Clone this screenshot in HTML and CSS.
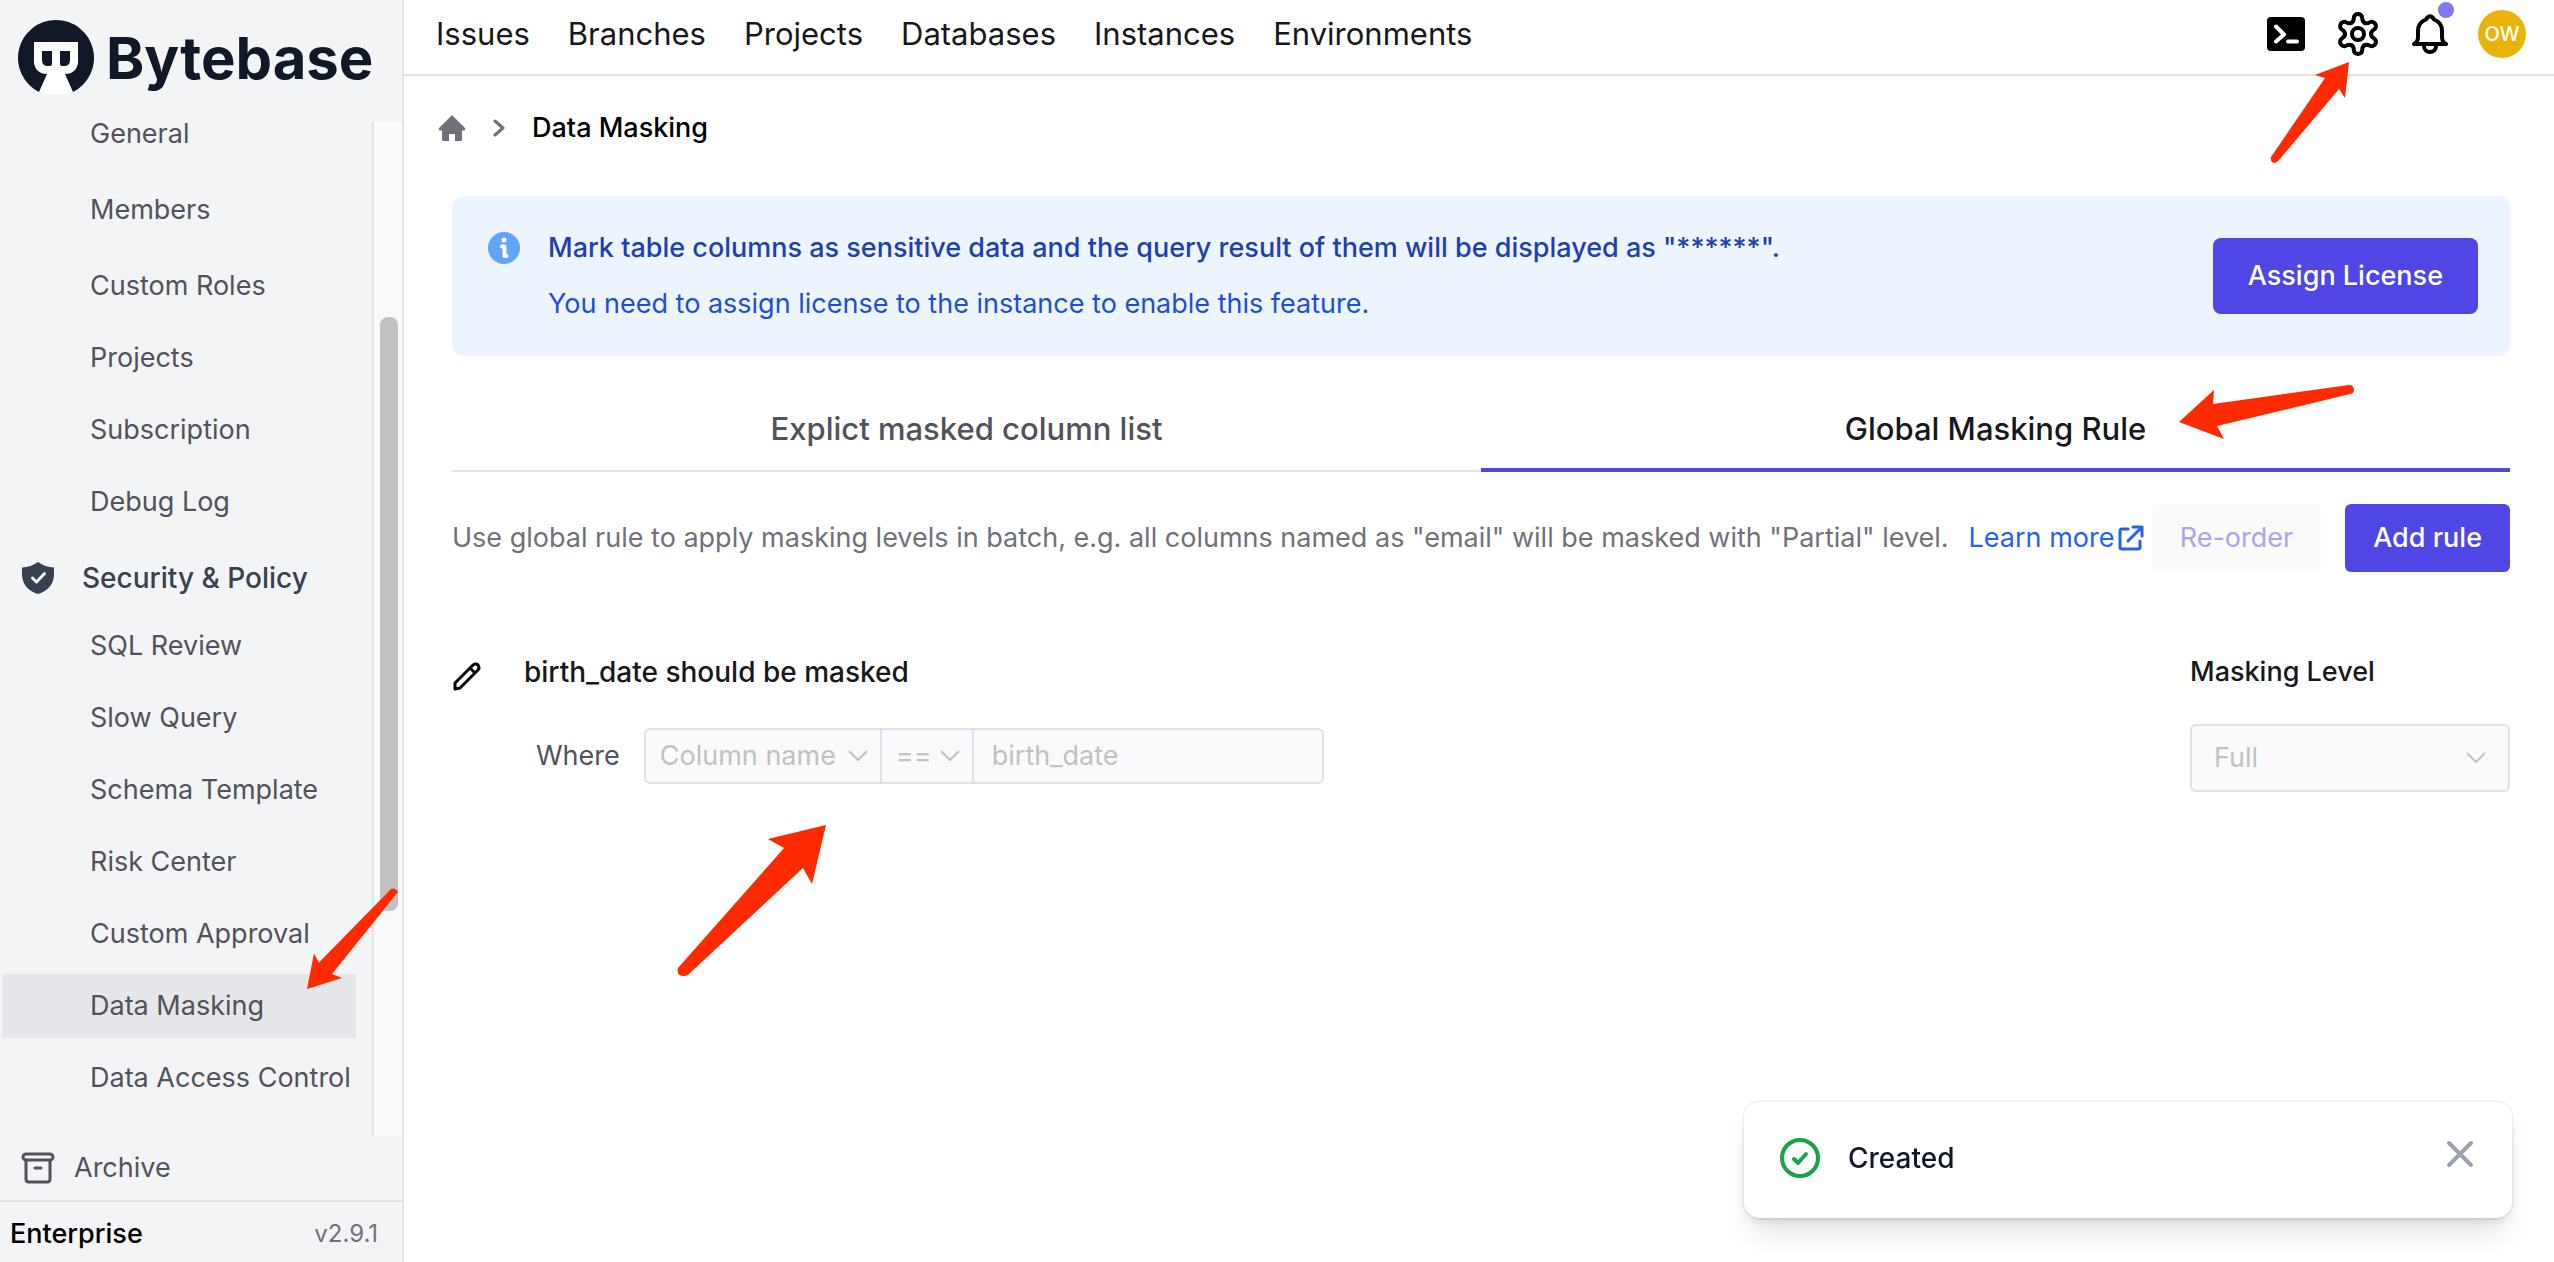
FILE: index.html
```html
<!DOCTYPE html>
<html lang="en">
<head>
    <meta charset="UTF-8">
    <meta name="viewport" content="width=device-width, initial-scale=1.0">
    <title>Data Masking - Bytebase</title>
    <link rel="stylesheet" href="styles.css">
</head>
<body>
    <div class="app">
        <aside class="sidebar">
            <a class="logo" href="#">
                <svg width="76" height="76" viewBox="0 0 76 76" aria-hidden="true">
                    <path fill="#fff" d="M28 50h20l7 22q-17 5-34 0z"/>
                    <path fill="#111827" d="M38 0A38 38 0 0 1 55 72L47 54Q60 52 60 40V22H16v18Q16 52 29 54L21 72A38 38 0 0 1 38 0z"/>
                    <path fill="#fff" d="M16 22h44v18q0 14-14 14H30q-14 0-14-14z"/>
                    <path fill="#111827" d="M24 31h10v13q0 2-2 2h-2q-6 0-6-6zM42 31h10v9q0 6-6 6h-2q-2 0-2-2z"/>
                </svg>
                <span>Bytebase</span>
            </a>
            <div class="scroll-area">
                <nav class="side-nav">
                    <a href="#">General</a>
                    <a href="#" class="tall">Members</a>
                    <a href="#">Custom Roles</a>
                    <a href="#">Projects</a>
                    <a href="#">Subscription</a>
                    <a href="#">Debug Log</a>
                    <div class="side-title">
                        <svg width="32" height="32" viewBox="0 0 32 32" aria-hidden="true">
                            <path fill="#374151" d="M16 0q7 5 16 5.500V12c0 10-6 17-16 20C6 29 0 22 0 12V5.500Q9 5 16 0z"/>
                            <path d="M10.500 16l4 4 8-8.500" fill="none" stroke="#f3f4f6" stroke-width="3" stroke-linecap="round" stroke-linejoin="round"/>
                        </svg>
                        <span>Security &amp; Policy</span>
                    </div>
                    <a href="#">SQL Review</a>
                    <a href="#">Slow Query</a>
                    <a href="#">Schema Template</a>
                    <a href="#">Risk Center</a>
                    <a href="#">Custom Approval</a>
                    <a href="#" class="active">Data Masking
                        <svg class="arrow arrow-menu" width="92" height="102" viewBox="0 0 92 102" aria-hidden="true">
                            <path d="M0 101 7 65.500l5 9L84 1q4-2 7 3l-66 82 10 4z"/>
                        </svg>
                    </a>
                    <a href="#">Data Access Control</a>
                </nav>
                <div class="track"><div class="thumb"></div></div>
            </div>
            <a class="archive" href="#">
                <svg width="34" height="32" viewBox="0 0 34 32" fill="none" stroke="#52525b" stroke-width="3" stroke-linecap="round" stroke-linejoin="round" aria-hidden="true">
                    <rect x="2" y="2" width="30" height="6" rx="3"/>
                    <path d="M5 8v19q0 3 3 3h18q3 0 3-3V8M14 16h6"/>
                </svg>
                <span>Archive</span>
            </a>
            <div class="plan">
                <span>Enterprise</span>
                <span class="version">v2.9.1</span>
            </div>
        </aside>

        <div class="content">
            <header class="topbar">
                <nav class="top-nav">
                    <a href="#">Issues</a>
                    <a href="#">Branches</a>
                    <a href="#">Projects</a>
                    <a href="#">Databases</a>
                    <a href="#">Instances</a>
                    <a href="#">Environments</a>
                </nav>
                <div class="top-actions">
                    <button class="icon-btn" aria-label="SQL Editor">
                        <svg width="40" height="34" viewBox="0 0 40 34" aria-hidden="true">
                            <rect x="1" width="38" height="34" rx="4"/>
                            <path d="M10 9.500l8 8-8 7M22 24.500h9" fill="none" stroke="#fff" stroke-width="4" stroke-linecap="round" stroke-linejoin="round"/>
                        </svg>
                    </button>
                    <button class="icon-btn" aria-label="Settings">
                        <svg width="48" height="48" viewBox="-24 -24 48 48" fill="none" stroke="#000" stroke-width="4" stroke-linecap="round" aria-hidden="true">
                            <circle r="6"/>
                            <path d="M-6.500-11.300C-4.500-12.400-4.200-14-4.200-16C-4.200-21.300 4.200-21.300 4.200-16C4.200-14 4.500-12.400 6.500-11.300"/>
                            <path transform="rotate(60)" d="M-6.500-11.300C-4.500-12.400-4.200-14-4.200-16C-4.200-21.300 4.200-21.300 4.200-16C4.200-14 4.500-12.400 6.500-11.300"/>
                            <path transform="rotate(120)" d="M-6.500-11.300C-4.500-12.400-4.200-14-4.200-16C-4.200-21.300 4.200-21.300 4.200-16C4.200-14 4.500-12.400 6.500-11.300"/>
                            <path transform="rotate(180)" d="M-6.500-11.300C-4.500-12.400-4.200-14-4.200-16C-4.200-21.300 4.200-21.300 4.200-16C4.200-14 4.500-12.400 6.500-11.300"/>
                            <path transform="rotate(240)" d="M-6.500-11.300C-4.500-12.400-4.200-14-4.200-16C-4.200-21.300 4.200-21.300 4.200-16C4.200-14 4.500-12.400 6.500-11.300"/>
                            <path transform="rotate(300)" d="M-6.500-11.300C-4.500-12.400-4.200-14-4.200-16C-4.200-21.300 4.200-21.300 4.200-16C4.200-14 4.500-12.400 6.500-11.300"/>
                        </svg>
                        <svg class="arrow arrow-gear" width="80" height="102" viewBox="0 0 80 102" aria-hidden="true">
                            <path d="M79 0 45 13l10 3L1 95q-1 5 3 6 3 0 5-3l60-71 6 9z"/>
                        </svg>
                    </button>
                    <button class="icon-btn" aria-label="Notifications">
                        <svg width="36" height="40" viewBox="0 0 36 40" fill="none" stroke="#000" stroke-width="4" stroke-linejoin="round" aria-hidden="true">
                            <path d="M2 30Q6 28 6 23V17C6 10 10 7 14 5.500Q18-1 22 5.500C26 7 30 10 30 17V23Q30 28 34 30z"/>
                            <path d="M12 31v1a6 6 0 0 0 12 0v-1"/>
                        </svg>
                        <span class="dot"></span>
                    </button>
                    <button class="avatar">OW</button>
                </div>
            </header>

            <main class="page">
                <nav class="breadcrumb">
                    <a href="#" aria-label="Home">
                        <svg width="28" height="28" viewBox="0 0 28 28" fill="#71717a" aria-hidden="true">
                            <path d="M14 1 27 14q1 2-1 2.500H24V26q0 1-1 1h-6v-7h-6v7H5q-1 0-1-1v-9.500H2Q0 16 1 14z"/>
                        </svg>
                    </a>
                    <svg width="12" height="18" viewBox="0 0 12 18" fill="none" stroke="#71717a" stroke-width="3" stroke-linecap="round" stroke-linejoin="round" aria-hidden="true">
                        <path d="M2 2l8 7-8 7"/>
                    </svg>
                    <span>Data Masking</span>
                </nav>

                <section class="banner">
                    <svg width="32" height="32" viewBox="0 0 32 32" aria-hidden="true">
                        <circle cx="16" cy="16" r="16" fill="#60a5fa"/>
                        <circle cx="16" cy="8" r="2.500" fill="#fff"/>
                        <path d="M14 14.500h2.500V24h2" fill="none" stroke="#fff" stroke-width="4" stroke-linecap="round" stroke-linejoin="round"/>
                    </svg>
                    <div class="banner-text">
                        <h3>Mark table columns as sensitive data and the query result of them will be displayed as "******".</h3>
                        <p>You need to assign license to the instance to enable this feature.</p>
                    </div>
                    <button class="btn-primary btn-license">Assign License</button>
                </section>

                <div class="tabs">
                    <button class="tab">Explict masked column list</button>
                    <button class="tab tab-active">
                        <span class="tab-label">Global Masking Rule
                            <svg class="arrow arrow-tab" width="176" height="56" viewBox="0 0 176 56" aria-hidden="true">
                                <path d="M0 38 35 6l-1 14L170 1q5 0 5 5 0 3-4 4L38 42l7 13z"/>
                            </svg>
                        </span>
                    </button>
                </div>

                <div class="toolbar">
                    <p>
                        <span>Use global rule to apply masking levels in batch, e.g. all columns named as "email" will be masked with "Partial" level.</span>
                        <a href="#">Learn more<svg width="26" height="26" viewBox="0 0 26 26" fill="none" stroke="#2563eb" stroke-width="3" stroke-linecap="round" stroke-linejoin="round" aria-hidden="true">
                            <path d="M10 4H4Q2 4 2 6v16q0 2 2 2h16q2 0 2-2v-6M15 2h9v9M23 3 10 16"/>
                        </svg></a>
                    </p>
                    <div class="toolbar-buttons">
                        <button class="btn-plain" disabled>Re-order</button>
                        <button class="btn-primary">Add rule</button>
                    </div>
                </div>

                <section class="rule">
                    <button class="edit-btn" aria-label="Edit rule">
                        <svg width="30" height="30" viewBox="0 0 30 30" fill="none" stroke="#000" stroke-width="3" stroke-linejoin="round" aria-hidden="true">
                            <path d="M3 28v-6L21 4q3-2 5 0 2 3 0 5L8 27zM18 7l5 5"/>
                        </svg>
                    </button>
                    <div class="rule-body">
                        <h3>birth_date should be masked</h3>
                        <div class="condition">
                            <span>Where</span>
                            <div class="condition-fields">
                                <div class="select-wrap field-column">
                                    <select disabled aria-label="Factor"><option>Column name</option></select>
                                    <svg class="chevron" width="20" height="12" viewBox="0 0 20 12" aria-hidden="true"><path d="M1 1l9 9 9-9"/></svg>
                                </div>
                                <div class="select-wrap field-operator">
                                    <select disabled aria-label="Operator"><option>==</option></select>
                                    <svg class="chevron" width="20" height="12" viewBox="0 0 20 12" aria-hidden="true"><path d="M1 1l9 9 9-9"/></svg>
                                </div>
                                <input type="text" value="birth_date" disabled aria-label="Value">
                                <svg class="arrow arrow-rule" width="150" height="154" viewBox="0 0 150 154" aria-hidden="true">
                                    <path d="M149 1 91 15l16 9L1 144q-2 8 6 8 4 0 6-3L126 44l9 16z"/>
                                </svg>
                            </div>
                        </div>
                    </div>
                    <div class="level">
                        <label for="level">Masking Level</label>
                        <div class="select-wrap">
                            <select id="level" disabled><option>Full</option></select>
                            <svg class="chevron" width="20" height="12" viewBox="0 0 20 12" aria-hidden="true"><path d="M1 1l9 9 9-9"/></svg>
                        </div>
                    </div>
                </section>
            </main>
        </div>
    </div>

    <div class="toast" role="status">
        <svg width="40" height="40" viewBox="0 0 40 40" fill="none" stroke="#16a34a" stroke-width="4" stroke-linecap="round" stroke-linejoin="round" aria-hidden="true">
            <circle cx="20" cy="20" r="18"/>
            <path d="M14 21l4 4 8-9"/>
        </svg>
        <span>Created</span>
        <button aria-label="Close">
            <svg width="28" height="28" viewBox="0 0 28 28" fill="none" stroke="#9ca3af" stroke-width="4" stroke-linecap="round" aria-hidden="true">
                <path d="M3 3l22 22M25 3 3 25"/>
            </svg>
        </button>
    </div>
</body>
</html>
```

FILE: styles.css
```css
* {
    box-sizing: border-box;
}
body {
    margin: 0;
    font-family: Inter, "Liberation Sans", sans-serif;
    font-size: 27px;
    line-height: 40px;
    color: #18181b;
    background: #fff;
}
a {
    color: inherit;
    text-decoration: none;
}
h3, p {
    margin: 0;
    font-size: 27px;
}
button, input, select {
    font: inherit;
    color: inherit;
    margin: 0;
    padding: 0;
    border: 0;
    background: none;
}
svg {
    display: block;
    flex-shrink: 0;
}
.app {
    display: flex;
    min-height: 100vh;
}

/* Sidebar */
.sidebar {
    display: flex;
    flex-direction: column;
    flex-shrink: 0;
    width: 404px;
    background: #f3f4f6;
    border-right: 2px solid #e4e4e7;
}
.logo {
    display: flex;
    align-items: center;
    gap: 12px;
    height: 102px;
    padding: 14px 0 0 18px;
    font-size: 58px;
    font-weight: 700;
    color: #111827;
}
.scroll-area {
    display: flex;
    flex: 1;
}
.side-nav {
    flex: 1;
    min-width: 0;
    display: flex;
    flex-direction: column;
    gap: 8px;
    padding: 0 16px 0 2px;
    color: #52525b;
    white-space: nowrap;
}
.side-nav a {
    position: relative;
    padding: 12px 0 12px 88px;
}
.side-nav .tall {
    padding-top: 16px;
    padding-bottom: 16px;
}
.side-nav .active {
    background: #e5e7eb;
}
.side-title {
    display: flex;
    align-items: center;
    gap: 28px;
    padding: 16px 0 8px 20px;
    color: #374151;
    font-size: 28px;
    font-weight: 500;
}
.track {
    flex-shrink: 0;
    width: 30px;
    margin-top: 20px;
    padding: 195px 4px 0 6px;
    background: #fafafa;
    border-left: 2px solid #e4e4e7;
}
.thumb {
    height: 594px;
    border-radius: 8px;
    background: #c1c1c1;
}
.archive {
    display: flex;
    align-items: center;
    gap: 19px;
    height: 64px;
    padding-left: 21px;
    color: #52525b;
}
.plan {
    display: flex;
    align-items: center;
    justify-content: space-between;
    height: 62px;
    padding: 4px 24px 0 10px;
    border-top: 2px solid #e4e4e7;
    color: #000;
    font-weight: 500;
}
.version {
    font-size: 24px;
    font-weight: 400;
    color: #71717a;
}

/* Top bar */
.content {
    flex: 1;
    min-width: 0;
}
.topbar {
    display: flex;
    align-items: center;
    justify-content: space-between;
    height: 76px;
    padding: 0 28px 6px 32px;
    border-bottom: 2px solid #e4e4e7;
}
.top-nav {
    display: flex;
    gap: 38px;
    font-size: 31px;
}
.top-actions {
    display: flex;
    gap: 24px;
}
.icon-btn {
    position: relative;
    display: flex;
    align-items: center;
    justify-content: center;
    width: 48px;
    height: 48px;
}
.dot {
    position: absolute;
    top: -8px;
    right: 0;
    width: 16px;
    height: 16px;
    border-radius: 50%;
    background: #8078ec;
}
.avatar {
    width: 48px;
    height: 48px;
    border-radius: 50%;
    background: #eab308;
    color: #fff;
    font-size: 20px;
    font-weight: 500;
}

/* Page */
.page {
    padding: 32px 44px 0 48px;
}
.breadcrumb {
    display: flex;
    align-items: center;
    gap: 27px;
    margin: 0 0 48px -14px;
    color: #000;
    font-weight: 500;
}
.banner {
    display: flex;
    gap: 28px;
    padding: 32px 32px 32px 36px;
    border-radius: 12px;
    background: #ecf5ff;
}
.banner > svg {
    margin-top: 4px;
}
.banner-text {
    flex: 1;
}
.banner-text h3 {
    font-weight: 500;
    color: #1e40af;
}
.banner-text p {
    margin-top: 16px;
    color: #1d4ed8;
}
.btn-primary {
    padding: 14px 28px;
    border-radius: 6px;
    background: #4f46e5;
    color: #fff;
    font-weight: 500;
}
.btn-license {
    align-self: center;
    padding: 18px 35px;
    border-radius: 8px;
}
.tabs {
    display: grid;
    grid-template-columns: 1fr 1fr;
    margin-top: 32px;
}
.tab {
    height: 84px;
    border-bottom: 2px solid #e4e4e7;
    color: #52525b;
    font-size: 31px;
    font-weight: 500;
}
.tab-active {
    padding-top: 2px;
    border-bottom: 4px solid #4f46e5;
    color: #18181b;
}
.tab-label {
    position: relative;
}
.toolbar {
    display: flex;
    align-items: center;
    justify-content: space-between;
    margin-top: 32px;
    color: #71717a;
    white-space: nowrap;
}
.toolbar p {
    display: flex;
    gap: 20px;
}
.toolbar a {
    display: flex;
    align-items: center;
    gap: 4px;
    color: #2563eb;
}
.toolbar-buttons {
    display: flex;
    gap: 24px;
}
.btn-plain {
    padding: 14px 28px;
    border-radius: 6px;
    background: #fafafa;
    color: #aca3ee;
}

/* Masking rule */
.rule {
    display: flex;
    margin-top: 80px;
    font-weight: 500;
}
.edit-btn {
    align-self: flex-start;
    padding-top: 9px;
}
.rule-body {
    flex: 1;
    padding-left: 42px;
}
.rule-body h3 {
    font-size: 28px;
    font-weight: 500;
}
.condition {
    display: flex;
    align-items: center;
    gap: 24px;
    margin-top: 36px;
    padding-left: 12px;
    color: #52525b;
    font-weight: 400;
}
.condition-fields {
    position: relative;
    display: flex;
    width: 680px;
    height: 56px;
    border: 2px solid #e0e0e6;
    border-radius: 6px;
    background: #fafafc;
}
.select-wrap {
    position: relative;
}
.select-wrap select {
    width: 100%;
    height: 100%;
    appearance: none;
}
select:disabled, input:disabled {
    color: #c2c2c2;
    opacity: 1;
}
.chevron {
    position: absolute;
    top: 50%;
    right: 12px;
    margin-top: -6px;
    fill: none;
    stroke: #c2c2c2;
    stroke-width: 2px;
}
.field-column {
    width: 236px;
    border-right: 2px solid #e0e0e6;
}
.field-operator {
    width: 92px;
    border-right: 2px solid #e0e0e6;
}
.condition-fields select {
    padding-left: 14px;
}
.condition-fields input {
    flex: 1;
    min-width: 0;
    padding-left: 18px;
}
.level {
    width: 320px;
}
.level label {
    display: block;
}
.level .select-wrap {
    height: 68px;
    margin-top: 32px;
    border: 2px solid #e0e0e6;
    border-radius: 6px;
    background: #fafafc;
    font-weight: 400;
}
.level select {
    padding-left: 22px;
}
.level .chevron {
    right: 22px;
}

/* Notification */
.toast {
    position: fixed;
    right: 42px;
    bottom: 44px;
    display: flex;
    align-items: center;
    gap: 28px;
    width: 768px;
    height: 116px;
    padding: 0 38px 4px 36px;
    border-radius: 16px;
    background: #fff;
    box-shadow: 0 0 0 2px rgba(0, 0, 0, 0.05), 0 20px 30px -6px rgba(0, 0, 0, 0.1), 0 8px 12px -4px rgba(0, 0, 0, 0.1);
    color: #111827;
    font-size: 28px;
    font-weight: 500;
}
.toast button {
    margin-left: auto;
    padding-bottom: 8px;
}

/* Red pointers */
.arrow {
    position: absolute;
    z-index: 2;
    fill: #ff2a00;
    pointer-events: none;
}
.arrow-menu {
    top: -86px;
    left: 305px;
}
.arrow-gear {
    top: 52px;
    left: -64px;
}
.arrow-tab {
    top: -26px;
    left: 334px;
}
.arrow-rule {
    top: 94px;
    left: 31px;
}
```
